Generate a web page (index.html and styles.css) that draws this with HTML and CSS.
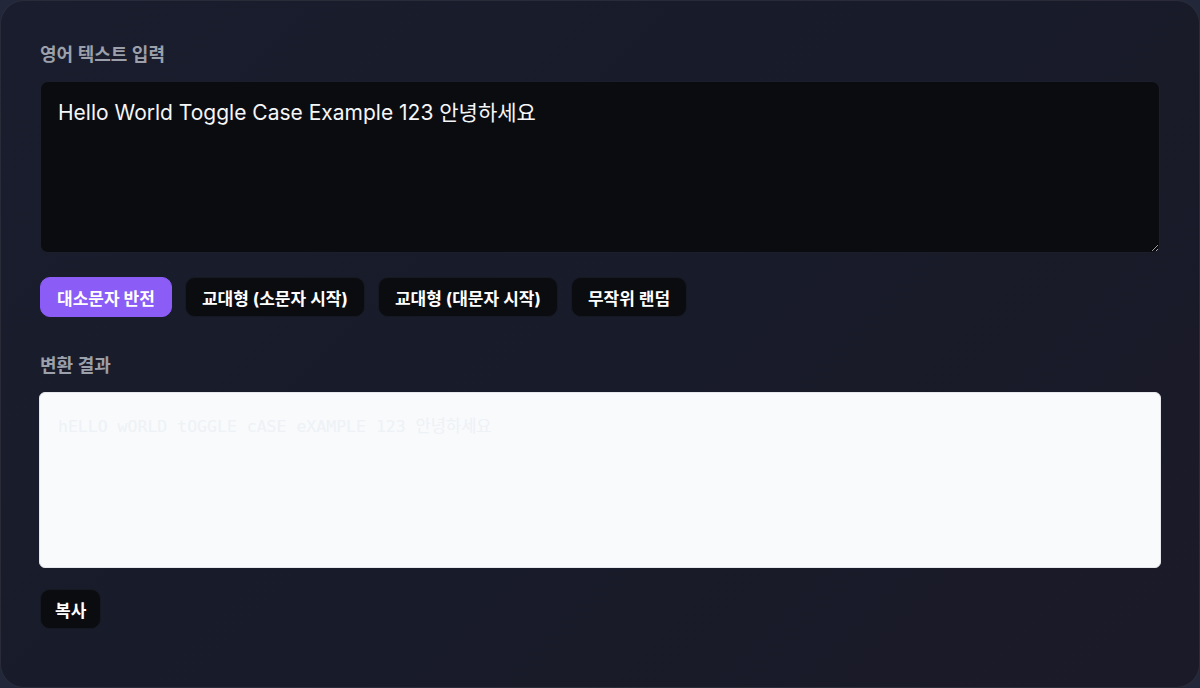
FILE: index.html
```html
<!DOCTYPE html>
<html lang="ko">
<head>
  <meta charset="UTF-8" />
  <meta name="viewport" content="width=device-width, initial-scale=1.0" />
  <title>대소문자 변환기</title>
  <link rel="stylesheet" href="styles.css">
</head>
<body>
  <main class="card">
    <label class="field-label" for="source">영어 텍스트 입력</label>
    <textarea id="source" class="input-box">Hello World Toggle Case Example 123 안녕하세요</textarea>

    <div class="modes">
      <button class="mode active">대소문자 반전</button>
      <button class="mode">교대형 (소문자 시작)</button>
      <button class="mode">교대형 (대문자 시작)</button>
      <button class="mode">무작위 랜덤</button>
    </div>

    <label class="field-label result-label" for="result">변환 결과</label>
    <textarea id="result" class="output-box" readonly>hELLO wORLD tOGGLE cASE eXAMPLE 123 안녕하세요</textarea>

    <div class="actions">
      <button class="mode copy">복사</button>
    </div>
  </main>
</body>
</html>
```

FILE: styles.css
```css
* { box-sizing: border-box; }

body {
  margin: 0;
  background: #222839;
  font-family: Inter, "Noto Sans CJK KR", sans-serif;
  color: #f3f4f6;
}

.card {
  height: 688px;
  width: 1200px;
  padding: 41px 39px 0 39px;
  border: 1px solid rgba(255, 255, 255, 0.07);
  border-radius: 24px;
  background: linear-gradient(135deg, #191d2d 0%, #181b29 55%, #1b1a29 100%);
  display: flex;
  flex-direction: column;
}

.field-label {
  font-size: 18px;
  font-weight: 600;
  color: #9ca0ab;
  line-height: 26px;
  margin-bottom: 13px;
}

.input-box {
  width: 100%;
  height: 172px;
  padding: 15px 17px;
  background: #0b0c10;
  border: 1px solid #1c1f2b;
  border-radius: 8px;
  color: #f5f6f8;
  font-family: Inter, "Noto Sans CJK KR", sans-serif;
  font-size: 21px;
  line-height: 32px;
  resize: vertical;
  outline: none;
}

.modes {
  display: flex;
  gap: 13px;
  margin-top: 24px;
}

.mode {
  height: 40px;
  padding: 0 16px;
  border: 1px solid #161822;
  border-radius: 10px;
  background: #0b0c10;
  color: #ffffff;
  font-family: Inter, "Noto Sans CJK KR", sans-serif;
  font-size: 17px;
  font-weight: 700;
  cursor: pointer;
}

.mode.active {
  background: #8b5cf6;
  border-color: #8b5cf6;
}

.result-label {
  margin-top: 36px;
  margin-bottom: 13px;
}

.output-box {
  width: calc(100% + 2px);
  margin-left: -1px;
  height: 176px;
  padding: 22px 18px;
  background: #f8fafc;
  border: 1px solid #e5e7eb;
  border-radius: 6px;
  color: #eef1f5;
  font-family: "DejaVu Sans Mono", "Noto Sans CJK KR", monospace;
  font-size: 16.5px;
  line-height: 24px;
  resize: none;
  outline: none;
}

.actions {
  display: flex;
  margin-top: 21px;
}

.copy {
  padding: 0 14px;
}
```
